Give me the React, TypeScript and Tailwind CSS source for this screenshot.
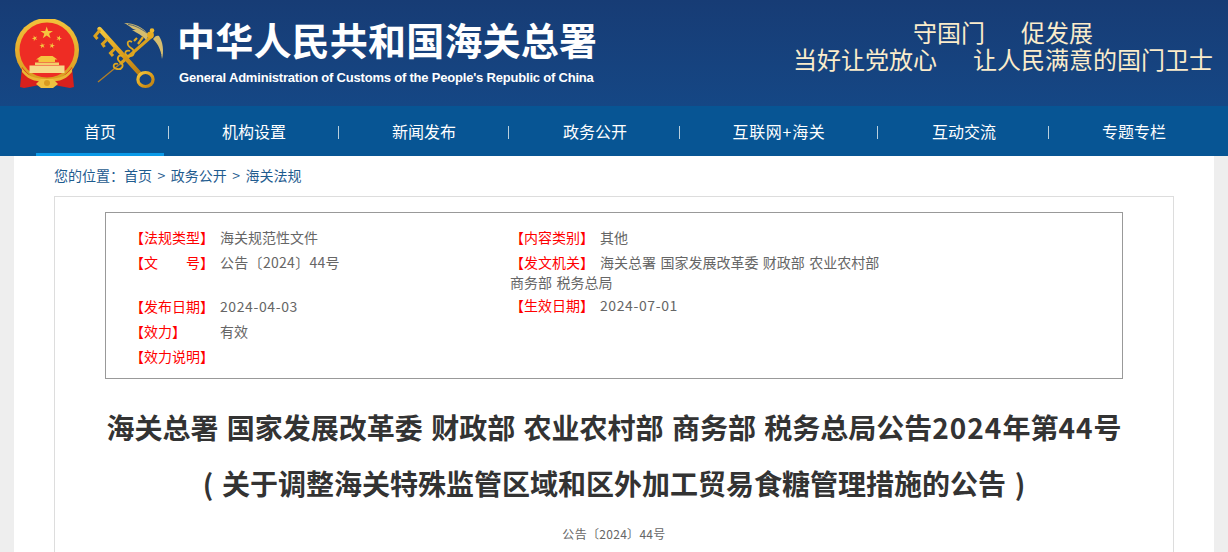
import React from "react";

const F = "font-['Microsoft_YaHei','Noto_Sans_CJK_SC',sans-serif]";

function star(cx: number, cy: number, r: number, rot = 0) {
  const pts: string[] = [];
  for (let i = 0; i < 10; i++) {
    const rad = i % 2 === 0 ? r : r * 0.38;
    const a = ((-90 + rot + i * 36) * Math.PI) / 180;
    pts.push(`${(cx + rad * Math.cos(a)).toFixed(2)},${(cy + rad * Math.sin(a)).toFixed(2)}`);
  }
  return pts.join(" ");
}

function Emblem() {
  return (
    <svg width="66" height="70" viewBox="0 0 66 70" className="mt-[4px] shrink-0">
      <defs>
        <linearGradient id="ring" x1="0" y1="0" x2="0" y2="1">
          <stop offset="0" stopColor="#f2c33c" />
          <stop offset="1" stopColor="#d99a20" />
        </linearGradient>
      </defs>
      <circle cx="33" cy="31" r="32" fill="url(#ring)" />
      <circle cx="33" cy="31" r="27.5" fill="#ee2c24" />
      <polygon points={star(32.7, 14, 6.6)} fill="#f5c63f" />
      <polygon points={star(20.7, 19.3, 3, -20)} fill="#f5c63f" />
      <polygon points={star(45, 19.3, 3, 20)} fill="#f5c63f" />
      <polygon points={star(28.3, 26.7, 3, -10)} fill="#f5c63f" />
      <polygon points={star(38, 26.7, 3, 10)} fill="#f5c63f" />
      <path d="M22 40.5 L27 37 H38.5 L43.5 40.5 H41 V43 H24.5 V40.5 Z" fill="#f5c63f" />
      <path d="M21 43.5 H45 V46 H21 Z" fill="#f3cf6a" />
      <path d="M15.5 46.5 H50.5 V54 H15.5 Z" fill="#f6d98a" />
      <path d="M8 48 C14 56 20 60 26 61 L26 66 L10 69 L6 68 Z" fill="#d8201c" />
      <path d="M58 48 C52 56 46 60 40 61 L40 66 L56 69 L60 68 Z" fill="#d8201c" />
      <path d="M8 49 C16 60 24 59 33 60 C42 59 50 60 58 49 L58 53 C50 63 42 62 33 63 C24 62 16 63 8 53 Z" fill="#eab534" />
      <path d="M22 65 L27 60 H39 L44 65 L39 69 H27 Z" fill="#f0c040" />
      <circle cx="33" cy="64" r="3" fill="#d99a20" />
    </svg>
  );
}

function KeyLogo() {
  return (
    <svg width="80" height="75" viewBox="0 0 80 75" className="ml-[10px] shrink-0">
      <defs>
        <linearGradient id="gold" x1="0" y1="0" x2="1" y2="1">
          <stop offset="0" stopColor="#f4c83e" />
          <stop offset="0.5" stopColor="#e0a11c" />
          <stop offset="1" stopColor="#b97e14" />
        </linearGradient>
      </defs>
      <path d="M8 67 L30 49" stroke="#b27f28" strokeWidth="1.3" fill="none" />
      <path d="M30 49 L62 21" stroke="#d9a11f" strokeWidth="3" fill="none" />
      <path d="M9.5 14 L50 59" stroke="url(#gold)" strokeWidth="4.4" strokeLinecap="round" fill="none" />
      <path d="M10 15 L5 21 L7.5 24 M17.5 24 L12.5 29 L14.5 32 M25.5 33 L20.5 38 L23 41" stroke="#dba21e" strokeWidth="3" fill="none" />
      <ellipse cx="55.5" cy="64.5" rx="7.6" ry="7" stroke="url(#gold)" strokeWidth="3.2" fill="none" />
      <path d="M42 27 C37 24 36 30 41 33 C46 36 44 42 39 41 C33 40 35 34 40 36 M33 41 C28 39 26 44 30 47 C35 50 32 55 27 54 C22 53 23 47 28 49" stroke="#dfa820" strokeWidth="1.8" fill="none" />
      <path d="M59 20 C53 12 44 8 34 8 C40 11 42 14 46 15 C44 15 43 15 42 15 C47 18 52 20 56 25 Z" fill="#d6bd6e" />
      <path d="M63 24 C69 30 71 36 72 44 C74 36 73 27 69 21 C67 20 65 21 63 24 Z" fill="#d6bd6e" />
      <path d="M63 26 C67 30 69 34 71 40" stroke="#1c4176" strokeWidth="0.7" fill="none" />
      <path d="M57 18 C50 13 44 10 38 9.5" stroke="#1c4176" strokeWidth="0.7" fill="none" />
      <circle cx="60.5" cy="20" r="3.4" fill="#e5ab21" />
      <circle cx="62" cy="15.5" r="2.3" fill="#eeb92c" />
      <path d="M47 23 L44 26 M53 22 L48 29" stroke="#e5ab21" strokeWidth="2.2" />
    </svg>
  );
}

const navItems = ["首页", "机构设置", "新闻发布", "政务公开", "互联网+海关", "互动交流", "专题专栏"];
const navW = ["w-[128px]", "w-[180px]", "w-[160px]", "w-[182px]", "w-[186px]", "w-[184px]", "w-[156px]"];
const sepPos = ["right-[-5px]", "right-[5px]", "right-[-5px]", "right-[6px]", "right-[-6px]", "right-[7px]"];

function Row({ label, value, spaced = "" }: { label: string; value: string; spaced?: string }) {
  return (
    <div className="flex h-[25px] items-center">
      <span className="w-[90px] shrink-0 text-[#ff0000]">{label}</span>
      <span className={spaced}>{value}</span>
    </div>
  );
}

export default function App() {
  return (
    <div className={`h-[552px] w-[1228px] overflow-hidden bg-white ${F}`}>
      <header className="flex h-[106px] items-start justify-between bg-gradient-to-b from-[#173c75] to-[#154785]">
        <div className="flex items-start pl-[14px] pt-[15px]">
          <Emblem />
          <KeyLogo />
          <div className="ml-[7px] text-white">
            <div className="mt-[1px] text-[38px] font-bold leading-[46px] tracking-[0.2px] whitespace-nowrap">中华人民共和国海关总署</div>
            <div className="ml-[2px] mt-[8px] font-['Liberation_Sans',sans-serif] text-[13px] font-bold leading-[16px] tracking-[-0.2px] whitespace-nowrap">General Administration of Customs of the People's Republic of China</div>
          </div>
        </div>
        <div className="pr-[15px] pt-[18px] text-[24px] leading-[27px] text-[#fbeccb]">
          <div className="flex justify-end gap-[36px] pr-[120px]"><span>守国门</span><span>促发展</span></div>
          <div className="flex gap-[36px]"><span>当好让党放心</span><span>让人民满意的国门卫士</span></div>
        </div>
      </header>
      <nav className="flex h-[50px] bg-[#075594] pl-[36px] text-[16px] text-white">
        {navItems.map((n, i) => (
          <div key={n} className={`relative flex h-full items-center justify-center pb-[1px] ${navW[i]} ${i === 4 ? "tracking-[0.7px]" : ""}`}>
            {n}
            {i === 0 && <span className="absolute bottom-0 left-0 h-[3px] w-full bg-[#0a9ae8]" />}
            {i < 6 && <span className={`absolute top-[20px] h-[13px] w-px bg-[#b9cfdd] ${sepPos[i]}`} />}
          </div>
        ))}
      </nav>
      <main className="bg-[#eeeeee] px-[14px]">
        <div className="h-[396px] overflow-hidden bg-white px-[40px]">
          <div className="flex h-[40px] items-center pb-[2px] text-[14px] text-[#1f5c8f]">
            您的位置：首页<span className="mx-[5.5px]">&gt;</span>政务公开<span className="mx-[5.5px]">&gt;</span>海关法规
          </div>
          <section className="h-[400px] border border-[#dddddd] px-[50px] pt-[15px]">
            <div className="h-[167px] border border-[#999999] pl-[24px] pt-[12px] text-[14px] text-[#666666]">
              <div className="flex">
                <div className="w-[380px] shrink-0">
                  <Row label="【法规类型】" value="海关规范性文件" />
                  <Row label="【文　　号】" value="公告〔2024〕44号" spaced="tracking-[0.3px]" />
                  <div className="h-[19px]" />
                  <Row label="【发布日期】" value="2024-04-03" spaced="tracking-[0.6px]" />
                  <Row label="【效力】" value="有效" />
                  <Row label="【效力说明】" value="" />
                </div>
                <div className="w-[376px]">
                  <Row label="【内容类别】" value="其他" />
                  <div className="pb-[1px] pt-[2px] leading-[20px] [word-spacing:1.3px]">
                    <span className="inline-block w-[90px] text-[#ff0000]">【发文机关】</span>海关总署 国家发展改革委 财政部 农业农村部 商务部 税务总局
                  </div>
                  <Row label="【生效日期】" value="2024-07-01" spaced="tracking-[0.6px]" />
                </div>
              </div>
            </div>
            <h1 className="mt-[20px] text-center text-[28px] font-bold leading-[56px] text-[#333333] [word-spacing:2px]">
              海关总署 国家发展改革委 财政部 农业农村部 商务部 税务总局公告<span className="tracking-[1px]">2024</span>年第<span className="tracking-[1px]">44</span>号
              <br />
              <span className="inline-block w-[28px] text-center">(</span>关于调整海关特殊监管区域和区外加工贸易食糖管理措施的公告<span className="inline-block w-[28px] text-center">)</span>
            </h1>
            <p className="mt-[14px] text-center text-[12px] tracking-[0.3px] text-[#666666]">公告〔2024〕44号</p>
          </section>
        </div>
      </main>
    </div>
  );
}
